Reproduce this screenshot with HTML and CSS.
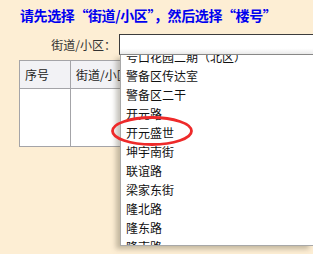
FILE: index.html
```html
<!DOCTYPE html>
<html lang="zh-CN">
<head>
  <meta charset="UTF-8" />
  <meta name="viewport" content="width=device-width, initial-scale=1.0" />
  <title>选择街道/小区</title>
  <link rel="stylesheet" href="styles.css">
</head>
<body>
  <div class="page">
    <h1 class="tip">请先选择“街道/小区”，然后选择“楼号”</h1>

    <div class="field">
      <label class="field-label" for="street">街道/小区：</label>
      <div class="combo">
        <input type="text" id="street" class="combo-input">
        <div class="combo-list">
          <ul>
            <li>号口花园二期（北区）</li>
            <li>警备区传达室</li>
            <li>警备区二干</li>
            <li>开元路</li>
            <li>开元盛世</li>
            <li>坤宇南街</li>
            <li>联谊路</li>
            <li>梁家东街</li>
            <li>隆北路</li>
            <li>隆东路</li>
            <li>隆南路</li>
          </ul>
        </div>
      </div>
    </div>

    <table class="grid">
      <thead>
        <tr><th class="col-no">序号</th><th class="col-name">街道/小区</th><th>楼号</th></tr>
      </thead>
      <tbody>
        <tr><td></td><td></td><td></td></tr>
      </tbody>
    </table>

    <!-- hand-drawn mark round the chosen item -->
    <svg class="mark" width="86" height="32" viewBox="0 0 86 32">
      <ellipse cx="42" cy="16" rx="39.5" ry="13.5" fill="none" stroke="#ee2a2a" stroke-width="2.8" />
    </svg>
  </div>
</body>
</html>
```

FILE: styles.css
```css
html, body { margin: 0; padding: 0; overflow: hidden; }
body { background: #fdeed4; font-family: "Noto Sans CJK SC", "DejaVu Sans", sans-serif; font-size: 12px; color: #222; }
.page { position: relative; width: 313px; height: 254px; overflow: hidden; }

.tip { margin: 0; padding: 5px 0 0 20px; font-size: 14px; line-height: 20px; font-weight: bold; letter-spacing: -0.4px; color: #0000f0; white-space: nowrap; }

.field { display: flex; align-items: center; margin-top: 9px; }
.field-label { flex-shrink: 0; width: 119px; text-align: right; font-size: 12px; color: #333; padding-right: 3px; box-sizing: border-box; }
.combo { position: relative; flex: 1; }
.combo-input { display: block; width: 100%; height: 21px; box-sizing: border-box; margin: 0; border: 1px solid #8a8a8a; border-right: none; border-top-color: #3c3c3c; border-left-color: #3c3c3c; background: linear-gradient(#fff 70%, #ececec); outline: none; }
.combo-list { position: absolute; top: 21px; left: 1px; right: 0; height: 191px; overflow: hidden; background: #fff; border: 1px solid #a8a8a8; border-top: none; border-right: none; box-sizing: border-box; box-shadow: -4px 3px 5px rgba(90, 80, 60, 0.35); z-index: 2; }
.combo-list ul { list-style: none; margin: -8px 0 0; padding: 0; }
.combo-list li { height: 19px; line-height: 19px; padding-left: 5px; font-size: 12px; color: #111; white-space: nowrap; }

.grid { margin: 5px 0 0 19px; border-collapse: collapse; background: #fff; width: 280px; table-layout: fixed; }
.grid th { height: 27px; background: #f2f2f5; border: 1px solid #a4a4a8; font-weight: normal; font-size: 12px; text-align: left; padding: 0 0 0 5px; color: #222; white-space: nowrap; overflow: hidden; }
.grid .col-no { width: 45px; }
.grid .col-name { width: 140px; }
.grid td { height: 55px; border: 1px solid #a4a4a8; border-top: none; }

.mark { position: absolute; left: 110px; top: 115px; z-index: 3; }
```
